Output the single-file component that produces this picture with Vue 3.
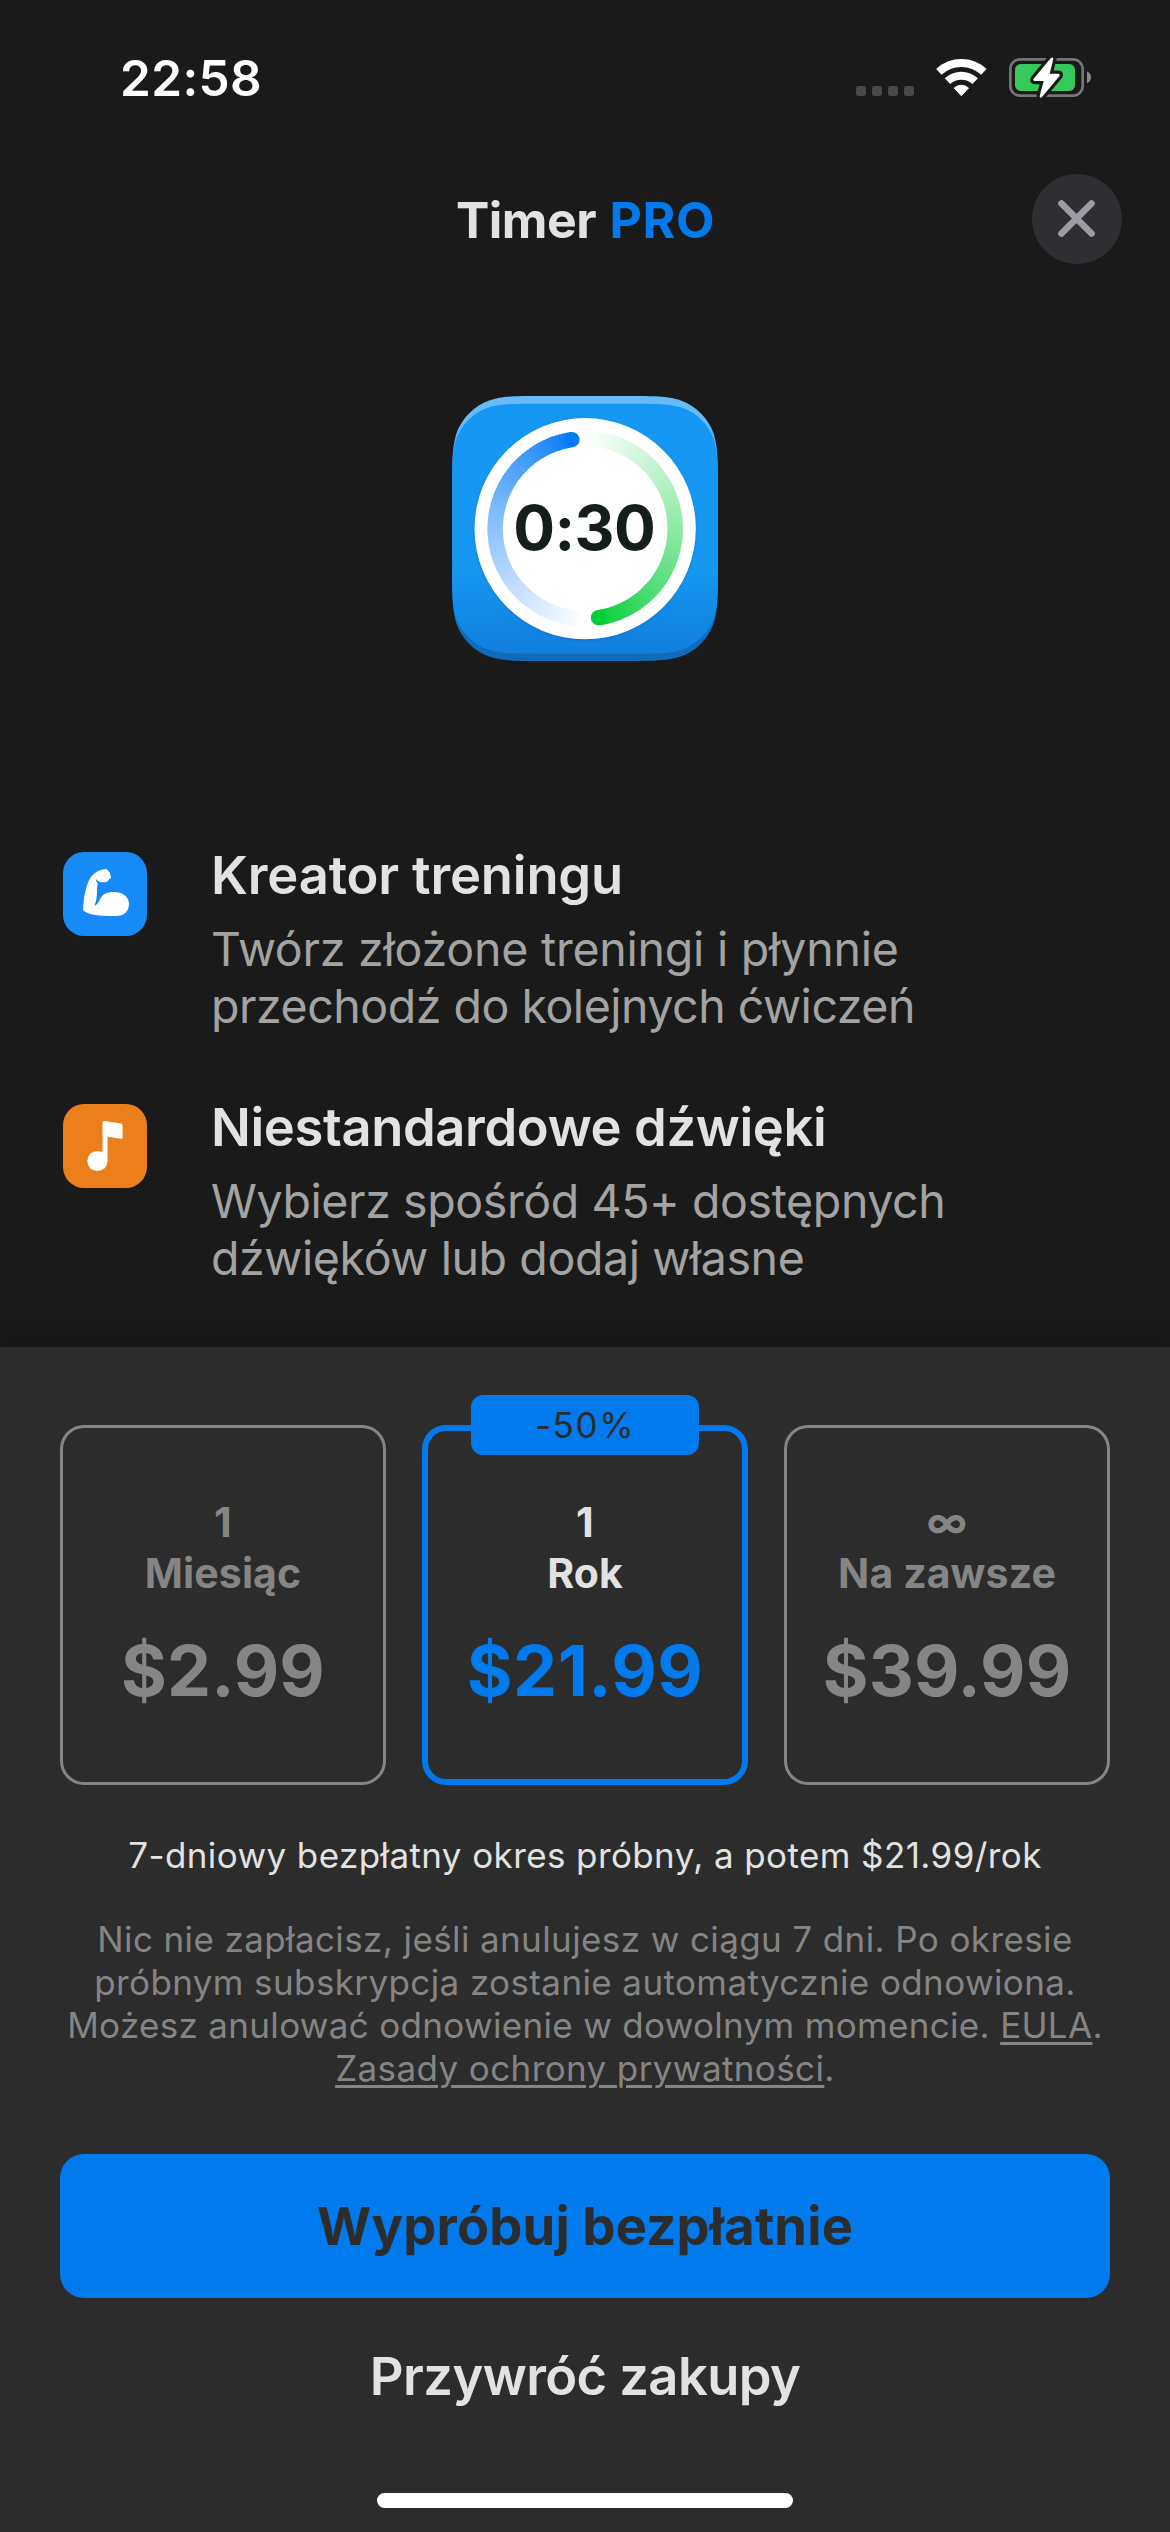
<script setup>
const features = [
  {
    id: 'creator',
    title: 'Kreator treningu',
    lines: ['Twórz złożone treningi i płynnie', 'przechodź do kolejnych ćwiczeń']
  },
  {
    id: 'sounds',
    title: 'Niestandardowe dźwięki',
    lines: ['Wybierz spośród 45+ dostępnych', 'dźwięków lub dodaj własne']
  }
]

const plans = [
  { id: 'month', count: '1', unit: 'Miesiąc', price: '$2.99' },
  { id: 'year', count: '1', unit: 'Rok', price: '$21.99', badge: '-50%', selected: true },
  { id: 'forever', count: '∞', unit: 'Na zawsze', price: '$39.99' }
]

// Rounded square with continuous corners
function squircle(x, y, w, h, r) {
  const a = 1.52866 * r, b = 1.08849 * r, c = 0.86841 * r, d = 0.63149 * r
  const e = 0.07491 * r, f = 0.37282 * r, g = 0.16906 * r
  const R = x + w, B = y + h
  return `M${x + a} ${y}H${R - a}C${R - b} ${y} ${R - c} ${y} ${R - d} ${y + e}` +
    `C${R - f} ${y + g} ${R - g} ${y + f} ${R - e} ${y + d}C${R} ${y + c} ${R} ${y + b} ${R} ${y + a}` +
    `V${B - a}C${R} ${B - b} ${R} ${B - c} ${R - e} ${B - d}C${R - g} ${B - f} ${R - f} ${B - g} ${R - d} ${B - e}` +
    `C${R - c} ${B} ${R - b} ${B} ${R - a} ${B}H${x + a}C${x + b} ${B} ${x + c} ${B} ${x + d} ${B - e}` +
    `C${x + f} ${B - g} ${x + g} ${B - f} ${x + e} ${B - d}C${x} ${B - c} ${x} ${B - b} ${x} ${B - a}` +
    `V${y + a}C${x} ${y + b} ${x} ${y + c} ${x + e} ${y + d}C${x + g} ${y + f} ${x + f} ${y + g} ${x + d} ${y + e}` +
    `C${x + c} ${y} ${x + b} ${y} ${x + a} ${y}Z`
}
const tile = squircle(66, 78, 797, 795, 176)
const tileFace = squircle(66, 101, 797, 750, 168)

// Half ring fading to white, split into short arcs
const CX = 465, CY = 476, RAD = 270, STEPS = 80
function point(deg) {
  const a = (deg * Math.PI) / 180
  return [CX - RAD * Math.sin(a), CY - RAD * Math.cos(a)]
}
function halfRing(rgb) {
  const from = 8.5, to = 178
  return Array.from({ length: STEPS }, (_, i) => {
    const s = from + ((to - from) * i) / STEPS
    const e = Math.min(to, from + ((to - from) * (i + 1.4)) / STEPS)
    const t = Math.pow(i / STEPS, 0.8)
    const [x1, y1] = point(s)
    const [x2, y2] = point(e)
    const col = rgb.map(v => Math.round(v + (255 - v) * t)).join(',')
    return { d: `M${x1} ${y1}A${RAD} ${RAD} 0 0 0 ${x2} ${y2}`, c: `rgb(${col})` }
  }).reverse()
}
const blueRing = halfRing([4, 122, 245])
const greenRing = halfRing([5, 206, 58])
const [capX, capY] = point(8.5)
</script>

<template>
  <main class="screen">
    <div class="status">
      <span class="time">22:58</span>
      <svg class="status-icons" viewBox="78 48 705 132">
        <rect v-for="x in [78, 126, 174, 222]" :key="x" :x="x" y="138" width="30" height="30" rx="9" fill="#4a4a4a" />
        <g fill="none" stroke="#fff" stroke-width="24">
          <path d="M326.5 95.6A99 99 0 0 1 461.5 95.6" />
          <path d="M352.4 123.4A61 61 0 0 1 435.6 123.4" />
        </g>
        <path d="M394 167L372.500 144A32 32 0 0 1 415.500 144Z" fill="#fff" stroke="#fff" stroke-width="3" stroke-linejoin="round" />
        <rect x="541" y="58" width="217" height="109" rx="29" fill="none" stroke="#757575" stroke-width="8" />
        <rect x="555" y="72" width="180" height="81" rx="17" fill="#35c85a" />
        <path d="M771 94Q783 100 783 112Q783 124 771 130Z" fill="#8a8a8a" />
        <path class="bolt" d="M662 55L612 115Q607 123 615 123H641L629 168Q629 177 636 171L688 109Q692 101 685 101H659L670 57Q670 49 662 55Z" />
      </svg>
    </div>

    <header class="header">
      <h1 class="title">Timer <span class="pro">PRO</span></h1>
      <button class="close" aria-label="Zamknij">
        <svg viewBox="0 0 270 270">
          <path d="M88.500 88.500L178.500 178.500M178.500 88.500L88.500 178.500" />
        </svg>
      </button>
    </header>

    <div class="hero">
      <svg class="app-icon" viewBox="66 78 797 795">
        <defs>
          <linearGradient id="face" x1="0" y1="0" x2="0" y2="1">
            <stop offset="0" stop-color="#1597f4" />
            <stop offset="0.68" stop-color="#1597f2" />
            <stop offset="1" stop-color="#127edd" />
          </linearGradient>
          <linearGradient id="edge" x1="0" y1="0" x2="0" y2="1">
            <stop offset="0.1" stop-color="#66bbf8" />
            <stop offset="0.3" stop-color="#1e98f2" />
            <stop offset="0.7" stop-color="#1591ea" />
            <stop offset="0.9" stop-color="#106bbb" />
          </linearGradient>
        </defs>
        <path :d="tile" fill="url(#edge)" />
        <path :d="tileFace" fill="url(#face)" />
        <circle class="dial" cx="465" cy="476" r="332" />
        <g fill="none" stroke-width="46">
          <path v-for="(s, i) in blueRing" :key="'b' + i" :d="s.d" :stroke="s.c" />
          <g transform="rotate(180 465 476)">
            <path v-for="(s, i) in greenRing" :key="'g' + i" :d="s.d" :stroke="s.c" />
          </g>
        </g>
        <circle :cx="capX" :cy="capY" r="23" fill="#047af5" />
        <circle :cx="capX" :cy="capY" r="23" fill="#05ce3a" transform="rotate(180 465 476)" />
        <text class="dial-text" x="462" y="540">0:30</text>
      </svg>
    </div>

    <section class="features">
      <article v-for="f in features" :key="f.id" class="feature" :class="f.id">
        <svg v-if="f.id === 'creator'" class="feature-icon" viewBox="39 36 252 252">
          <path fill="#fff" d="M167 87C172 87 174 90 175 94C180 96 181 100 180 104C184 107 184 113 181 116C177 117 176 119 174 123C170 127 164 127 158 127C150 127 143 124 138 117C138 123 139 126 144 130C141 138 141 146 141 156C141 172 138 186 133 198C141 194 148 184 151 176C158 161 174 156 192 156C220 157 237 171 237 192C237 214 222 228 198 228C165 229 120 227 103 214C98 210 99 204 100 196C102 168 108 140 117 121C128 99 146 89 167 87Z" />
        </svg>
        <svg v-else class="feature-icon" viewBox="0 0 84 84">
          <circle cx="34.400" cy="57" r="10.100" fill="#fff" />
          <path fill="#fff" d="M39.500 18.600Q39.500 17 41.200 17.100L58 19.400Q59.600 19.700 59.600 21.400V33.200Q59.600 35 58 34.700L44.500 32.700V57H39.500Z" />
        </svg>
        <div class="feature-text">
          <h2>{{ f.title }}</h2>
          <p><span v-for="l in f.lines" :key="l" class="line">{{ l }}</span></p>
        </div>
      </article>
    </section>

    <section class="panel">
      <div class="plans">
        <div v-for="p in plans" :key="p.id" class="plan" :class="{ selected: p.selected }">
          <span v-if="p.badge" class="badge">{{ p.badge }}</span>
          <span class="count">{{ p.count }}</span>
          <span class="unit">{{ p.unit }}</span>
          <span class="price">{{ p.price }}</span>
        </div>
      </div>
      <p class="trial">7-dniowy bezpłatny okres próbny, a potem $21.99/rok</p>
      <p class="legal">
        <span class="line">Nic nie zapłacisz, jeśli anulujesz w ciągu 7 dni. Po okresie</span>
        <span class="line">próbnym subskrypcja zostanie automatycznie odnowiona.</span>
        <span class="line tight">Możesz anulować odnowienie w dowolnym momencie. <a>EULA</a>.</span>
        <span class="line"><a>Zasady ochrony prywatności</a>.</span>
      </p>
      <button class="cta">Wypróbuj bezpłatnie</button>
      <button class="restore">Przywróć zakupy</button>
      <div class="home-indicator"></div>
    </section>
  </main>
</template>

<style>
body { margin: 0; background: #1a1a1a; }
</style>

<style scoped>
.screen {
  width: 1170px;
  height: 2532px;
  display: flex;
  flex-direction: column;
  overflow: hidden;
  background: #1a1a1a;
  color: #e2e2e2;
  font-family: Inter, "Liberation Sans", sans-serif;
}
h1, h2, p { margin: 0; }
button { border: 0; padding: 0; font-family: inherit; }
.line { display: block; white-space: nowrap; }

.status {
  height: 156px;
  box-sizing: border-box;
  padding: 0 79px 0 120px;
  display: flex;
  align-items: center;
  justify-content: space-between;
}
.time { color: #fff; font-size: 49.5px; font-weight: 600; letter-spacing: 0.35px; line-height: 60px; }
.status-icons { width: 235px; height: 44px; }
.bolt { fill: #fff; stroke: #1a1a1a; stroke-width: 19; stroke-linejoin: round; paint-order: stroke; }

.header {
  height: 126px;
  display: grid;
  grid-template-columns: 1fr auto 1fr;
  align-items: center;
  padding: 0 48px;
}
.title { grid-column: 2; padding: 2px 0 0 1px; font-size: 50px; font-weight: 700; line-height: 60px; white-space: nowrap; letter-spacing: -0.5px; }
.pro { margin-left: 2px; color: #007aec; letter-spacing: 0.6px; }
.close { justify-self: end; width: 90px; height: 90px; border-radius: 50%; background: #2f2e33; }
.close svg { display: block; width: 90px; height: 90px; }
.close path { stroke: #9d9ca5; stroke-width: 20; stroke-linecap: round; }

.hero { height: 379px; display: flex; justify-content: center; align-items: flex-end; }
.app-icon { width: 266px; height: 265px; }
.dial { fill: #fff; filter: drop-shadow(0 3px 4px rgba(0, 40, 90, 0.2)); }
.dial-text { font-size: 186px; font-weight: 700; letter-spacing: -1.8px; text-anchor: middle; fill: #161d1d; }

.features { padding: 184px 63px 60px; display: flex; flex-direction: column; gap: 62px; }
.feature { display: flex; gap: 64px; }
.feature-icon { flex: none; width: 84px; height: 84px; margin-top: 7px; border-radius: 21px; }
.creator .feature-icon { background: #168af6; }
.sounds .feature-icon { background: #ec7f1b; }
.feature-text h2 { font-size: 52.5px; line-height: 60px; font-weight: 600; letter-spacing: -0.37px; white-space: nowrap; }
.creator .feature-text h2 { letter-spacing: -0.16px; }
.feature-text p { margin-top: 16px; font-size: 46.5px; line-height: 57px; color: #a3a3a3; letter-spacing: -0.4px; }
.creator .line:first-child { letter-spacing: -0.23px; }
.creator .line:last-child { letter-spacing: -0.48px; }

.panel {
  flex: 1;
  display: flex;
  flex-direction: column;
  align-items: center;
  padding: 78px 60px 24px;
  background: #2c2c2c;
  box-shadow: 0 0 20px rgba(0, 0, 0, 0.28);
}
.plans { align-self: stretch; display: grid; grid-template-columns: repeat(3, 1fr); gap: 36px; }
.plan {
  position: relative;
  box-sizing: border-box;
  height: 360px;
  padding-top: 71.5px;
  display: flex;
  flex-direction: column;
  align-items: center;
  border-radius: 24px;
  box-shadow: inset 0 0 0 3px #858585;
  color: #858585;
}
.plan.selected { box-shadow: inset 0 0 0 6px #007aec; color: #e2e2e2; }
.badge {
  position: absolute;
  top: -30px;
  left: 49px;
  width: 228px;
  height: 60px;
  border-radius: 12px;
  background: #007aec;
  color: #2a2b2c;
  font-size: 35px;
  line-height: 60px;
  letter-spacing: 1.6px;
  text-align: center;
}
.count, .unit { font-size: 41px; line-height: 51px; font-weight: 700; letter-spacing: 0.1px; }
.price { margin-top: 29px; font-size: 70px; line-height: 86px; font-weight: 700; letter-spacing: 0.1px; }
.selected .price { letter-spacing: 0.5px; color: #007aec; }

.trial { margin-top: 48px; font-size: 35px; line-height: 44px; letter-spacing: 0.4px; white-space: nowrap; }
.legal { margin-top: 41px; font-size: 35px; line-height: 43px; letter-spacing: 0.39px; color: #858585; text-align: center; }
.legal .tight { letter-spacing: 0.32px; }
.legal a { text-decoration: underline; text-decoration-thickness: 3px; text-underline-offset: 4px; }

.cta {
  align-self: stretch;
  margin-top: 64px;
  height: 144px;
  border-radius: 24px;
  background: #007aec;
  color: #2c2c2c;
  font-size: 52.5px;
  font-weight: 700;
  letter-spacing: 0.2px;
}
.restore { margin-top: 48px; background: none; color: #e2e2e2; font-size: 52.5px; line-height: 60px; font-weight: 600; letter-spacing: -0.6px; }
.home-indicator { margin-top: auto; width: 416px; height: 15px; border-radius: 8px; background: #fff; }
</style>
